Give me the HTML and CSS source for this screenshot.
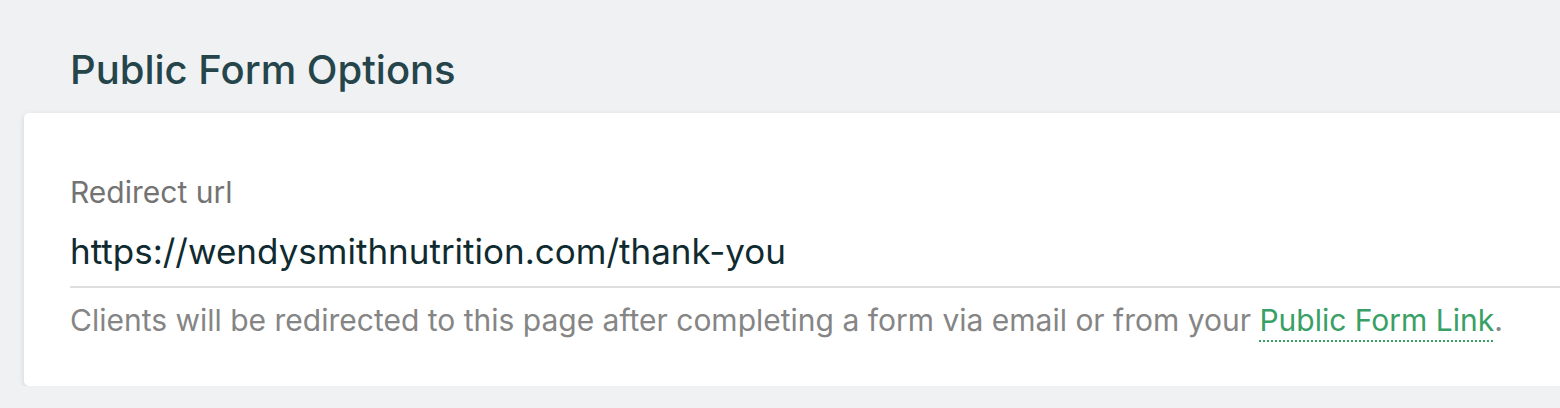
FILE: index.html
```html
<!DOCTYPE html>
<html>
<head>
<meta charset="utf-8">
<title>Public Form Options</title>
<link rel="stylesheet" href="styles.css">
</head>
<body>
<div class="page">
  <h2 class="title">Public Form Options</h2>
  <div class="card">
    <div class="field">
      <div class="label">Redirect url</div>
      <div class="value">https://wendysmithnutrition.com/thank-you</div>
    </div>
    <div class="help">Clients will be redirected to this page after completing a form via email or from your <a class="link" href="#">Public Form Link</a>.</div>
  </div>
</div>
</body>
</html>
```

FILE: styles.css
```css
body {
  margin: 0;
  background: #f0f1f3;
  font-family: Inter, "Noto Sans", sans-serif;
}
.page {
  padding: 46px 0 0 24px;
}
.title {
  margin: 0 0 0 46px;
  font-size: 40px;
  font-weight: 500;
  line-height: 48px;
  color: #25454b;
}
.card {
  margin-top: 19px;
  margin-right: -20px;
  background: #ffffff;
  border-radius: 5px;
  box-shadow: 0 2px 6px rgba(0, 0, 0, 0.12);
  padding: 61px 0 48px 46px;
}
.label {
  font-size: 30px;
  line-height: 36px;
  color: #737373;
}
.value {
  margin-top: 20px;
  font-size: 35px;
  line-height: 42px;
  color: #0f2b30;
  padding-bottom: 14px;
  border-bottom: 2px solid #dedede;
}
.help {
  margin-top: 14px;
  font-size: 30px;
  line-height: 36px;
  color: #858585;
}
.link {
  color: #38a064;
  text-decoration: underline dotted #38a064;
  text-decoration-thickness: 2px;
  text-underline-offset: 9px;
}
```
